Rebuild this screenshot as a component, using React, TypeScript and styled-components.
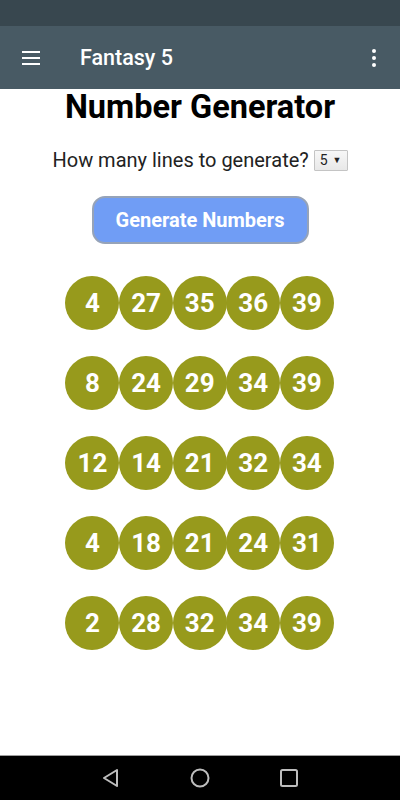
import styled, { createGlobalStyle } from "styled-components";

const GlobalStyle = createGlobalStyle`
    html, body {
        margin: 0;
        padding: 0;
        background: #ffffff;
        font-family: Roboto, "Liberation Sans", sans-serif;
    }
`;

const lines = [
    [4, 27, 35, 36, 39],
    [8, 24, 29, 34, 39],
    [12, 14, 21, 32, 34],
    [4, 18, 21, 24, 31],
    [2, 28, 32, 34, 39],
];

function App() {
    return (
        <Screen>
            <GlobalStyle />
            <StatusBar />
            <AppBar>
                <MenuIcon viewBox="0 0 24 24">
                    <path d="M3 6h18M3 12h18M3 18h18" stroke="#fff" strokeWidth="2" />
                </MenuIcon>
                <AppTitle>Fantasy 5</AppTitle>
                <MoreIcon viewBox="0 0 24 24">
                    <circle cx="12" cy="5" r="2" fill="#fff" />
                    <circle cx="12" cy="12" r="2" fill="#fff" />
                    <circle cx="12" cy="19" r="2" fill="#fff" />
                </MoreIcon>
            </AppBar>
            <Content>
                <Heading>Number Generator</Heading>
                <LinesRow>
                    How many lines to generate?
                    <Select>5 <Arrow>▼</Arrow></Select>
                </LinesRow>
                <GenerateButton>Generate Numbers</GenerateButton>
                <Lines>
                    {lines.map((line, i) => (
                        <BallRow key={i}>
                            {line.map((n, j) => (
                                <Ball key={j}>{n}</Ball>
                            ))}
                        </BallRow>
                    ))}
                </Lines>
            </Content>
            <NavBar>
                <svg width="22" height="22" viewBox="0 0 22 22">
                    <path d="M17 3 L4 11 L17 19 Z" fill="none" stroke="#bdbdbd" strokeWidth="2" strokeLinejoin="round" />
                </svg>
                <svg width="22" height="22" viewBox="0 0 22 22">
                    <circle cx="11" cy="11" r="8.5" fill="none" stroke="#bdbdbd" strokeWidth="2" />
                </svg>
                <svg width="22" height="22" viewBox="0 0 22 22">
                    <rect x="3" y="3" width="16" height="16" rx="1.5" fill="none" stroke="#bdbdbd" strokeWidth="2" />
                </svg>
            </NavBar>
        </Screen>
    );
}

const Screen = styled.div`
    width: 400px;
    height: 800px;
    display: flex;
    flex-direction: column;
    overflow: hidden;
`

const StatusBar = styled.div`
    height: 26px;
    background-color: #38474f;
`

const AppBar = styled.div`
    height: 63px;
    background-color: #485a64;
    display: flex;
    align-items: center;
    padding: 0 14px 0 19px;
`

const MenuIcon = styled.svg`
    width: 24px;
    height: 24px;
`

const AppTitle = styled.div`
    flex: 1;
    margin-left: 37px;
    color: #ffffff;
    font-size: 21.5px;
    font-weight: 500;
`

const MoreIcon = styled.svg`
    width: 24px;
    height: 24px;
`

const Content = styled.div`
    flex: 1;
    display: flex;
    flex-direction: column;
    align-items: center;
`

const Heading = styled.h1`
    margin: 0;
    font-size: 32.5px;
    line-height: 36px;
    font-weight: 700;
    color: #000000;
`

const LinesRow = styled.div`
    margin-top: 23px;
    font-size: 20px;
    line-height: 24px;
    color: #222222;
    display: flex;
    align-items: center;
    gap: 5px;
`

const Select = styled.div`
    height: 21px;
    box-sizing: border-box;
    padding: 0 5px;
    border: 1px solid #c4c4c4;
    background: linear-gradient(#f7f7f7, #e8e8e8);
    font-size: 14px;
    display: flex;
    align-items: center;
    gap: 5px;
    border-radius: 1px;
`

const Arrow = styled.span`
    font-size: 9px;
`

const GenerateButton = styled.button`
    margin-top: 24px;
    width: 217px;
    height: 48px;
    border-radius: 13px;
    border: 2px solid #96a3b8;
    background-color: #709df5;
    color: #ffffff;
    font-family: Roboto, "Liberation Sans", sans-serif;
    font-size: 20px;
    font-weight: 700;
`

const Lines = styled.div`
    margin-top: 32px;
    display: flex;
    flex-direction: column;
    gap: 26px;
`

const BallRow = styled.div`
    display: flex;
    gap: 0.3px;
`

const Ball = styled.div`
    width: 54px;
    height: 54px;
    margin-left: -0.7px;
    border-radius: 50%;
    background-color: #979a1c;
    color: #ffffff;
    font-size: 26px;
    font-weight: 700;
    display: flex;
    align-items: center;
    justify-content: center;
`

const NavBar = styled.div`
    height: 44px;
    background-color: #000000;
    border-top: 1px solid #9e9e9e;
    display: flex;
    align-items: center;
    justify-content: center;
    gap: 67px;
`

export default App;
